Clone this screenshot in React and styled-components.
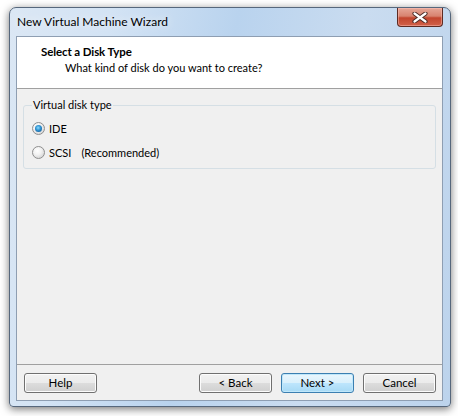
import styled, { createGlobalStyle } from "styled-components";

const GlobalStyle = createGlobalStyle`
  html, body {
    margin: 0;
    padding: 0;
    background: #ffffff;
  }
  body {
    font-family: Lato, "Noto Sans", sans-serif;
    font-size: 11px;
    color: #000;
  }
`;

const Page = styled.div`
  width: 458px;
  height: 416px;
  padding: 7px 0 0 9px;
  box-sizing: border-box;
`;

const Window = styled.div`
  width: 442px;
  height: 400px;
  box-sizing: border-box;
  border: 1px solid #56677c;
  border-radius: 7px 7px 4px 4px;
  background: linear-gradient(
    100deg,
    #dbe7f4 0%,
    #d3e3f4 20%,
    #b9d3ee 45%,
    #cadcf0 70%,
    #bcd3ec 100%
  );
  box-shadow: 0 2px 9px rgba(0, 0, 0, 0.55);
  display: flex;
  flex-direction: column;
  padding: 0 7px 5px 6px;
`;

const TitleBar = styled.div`
  height: 28px;
  display: flex;
  align-items: flex-start;
  justify-content: space-between;
`;

const Title = styled.div`
  padding: 6px 0 0 1px;
  font-size: 12px;
  color: #000;
  text-shadow: 0 0 8px rgba(255, 255, 255, 0.9);
`;

const CloseButton = styled.div`
  width: 46px;
  height: 19px;
  box-sizing: border-box;
  border: 1px solid #5d2a22;
  border-top: none;
  border-radius: 0 0 4px 4px;
  background: linear-gradient(
    180deg,
    #e6a797 0%,
    #d8836f 45%,
    #c2452d 55%,
    #d1624a 100%
  );
  box-shadow: inset 0 0 0 1px rgba(255, 200, 190, 0.45);
  display: flex;
  align-items: center;
  justify-content: center;
`;

const Client = styled.div`
  flex: 1;
  display: flex;
  flex-direction: column;
  background: #f0f0f0;
  border: 1px solid #8e9eb2;
`;

const Header = styled.div`
  height: 52px;
  box-sizing: border-box;
  background: #ffffff;
  border-bottom: 1px solid #a0a0a0;
  padding: 6px 0 0 24px;
`;

const HeaderTitle = styled.div`
  font-weight: bold;
  font-size: 11.5px;
  letter-spacing: -0.1px;
  line-height: 17px;
`;

const HeaderSub = styled.div`
  padding-left: 24px;
  line-height: 16px;
`;

const Body = styled.div`
  flex: 1;
  padding: 9px 6px 0 6px;
`;

const GroupBox = styled.fieldset`
  margin: 0;
  height: 71px;
  box-sizing: border-box;
  border: 1px solid #d5dfe5;
  border-radius: 3px;
  padding: 8px 0 0 8px;
  display: flex;
  flex-direction: column;
  gap: 8px;
`;

const Legend = styled.legend`
  padding: 0 1px;
  margin-left: 0;
  line-height: 14px;
`;

const RadioRow = styled.label`
  display: flex;
  align-items: center;
  gap: 4px;
  height: 16px;
`;

const RadioCircle = styled.span`
  width: 13px;
  height: 13px;
  box-sizing: border-box;
  border-radius: 50%;
  border: 1px solid #8f8f8f;
  background: radial-gradient(circle at 40% 35%, #ffffff 0%, #f2f2f2 40%, #c8c8c8 100%);
  display: flex;
  align-items: center;
  justify-content: center;

  &::after {
    content: "";
    display: ${(p) => (p.checked ? "block" : "none")};
    width: 7px;
    height: 7px;
    border-radius: 50%;
    background: radial-gradient(circle at 45% 40%, #8adcff 0%, #2c8fcf 45%, #0b4a82 100%);
  }
`;

const Extra = styled.span`
  margin-left: 6px;
`;

const Footer = styled.div`
  height: 36px;
  box-sizing: border-box;
  border-top: 1px solid #a0a0a0;
  padding: 8px 6px 0 7px;
  display: flex;
  align-items: flex-start;
`;

const Spacer = styled.div`
  flex: 1;
`;

const Button = styled.div`
  width: 73px;
  height: 20px;
  box-sizing: border-box;
  border: 1px solid ${(p) => (p.primary ? "#3c7fb1" : "#707070")};
  border-radius: 3px;
  margin-left: ${(p) => (p.first ? "0" : "9px")};
  background: ${(p) =>
    p.primary
      ? "linear-gradient(180deg, #eaf6fd 0%, #d9f0fc 50%, #bee6fd 50%, #a7d9f5 100%)"
      : "linear-gradient(180deg, #f2f2f2 0%, #ebebeb 50%, #dddddd 50%, #cfcfcf 100%)"};
  box-shadow: inset 0 0 0 1px ${(p) => (p.primary ? "#c0e7fa" : "#fcfcfc")};
  display: flex;
  align-items: center;
  justify-content: center;
  font-size: 11.5px;
  line-height: 16px;
`;

function CloseGlyph() {
  return (
    <svg width="16" height="11" viewBox="0 0 16 11">
      <path
        d="M2.5 1.5 L13.5 9.5 M13.5 1.5 L2.5 9.5"
        stroke="#4a2a24"
        strokeWidth="4.2"
        strokeLinecap="round"
      />
      <path
        d="M2.5 1.5 L13.5 9.5 M13.5 1.5 L2.5 9.5"
        stroke="#ffffff"
        strokeWidth="2.2"
        strokeLinecap="round"
      />
    </svg>
  );
}

export default function App() {
  return (
    <>
      <GlobalStyle />
      <Page>
        <Window>
          <TitleBar>
            <Title>New Virtual Machine Wizard</Title>
            <CloseButton>
              <CloseGlyph />
            </CloseButton>
          </TitleBar>
          <Client>
            <Header>
              <HeaderTitle>Select a Disk Type</HeaderTitle>
              <HeaderSub>What kind of disk do you want to create?</HeaderSub>
            </Header>
            <Body>
              <GroupBox>
                <Legend>Virtual disk type</Legend>
                <RadioRow>
                  <RadioCircle checked />
                  IDE
                </RadioRow>
                <RadioRow>
                  <RadioCircle />
                  SCSI
                  <Extra>(Recommended)</Extra>
                </RadioRow>
              </GroupBox>
            </Body>
            <Footer>
              <Button first>Help</Button>
              <Spacer />
              <Button>&lt; Back</Button>
              <Button primary>Next &gt;</Button>
              <Button>Cancel</Button>
            </Footer>
          </Client>
        </Window>
      </Page>
    </>
  );
}
